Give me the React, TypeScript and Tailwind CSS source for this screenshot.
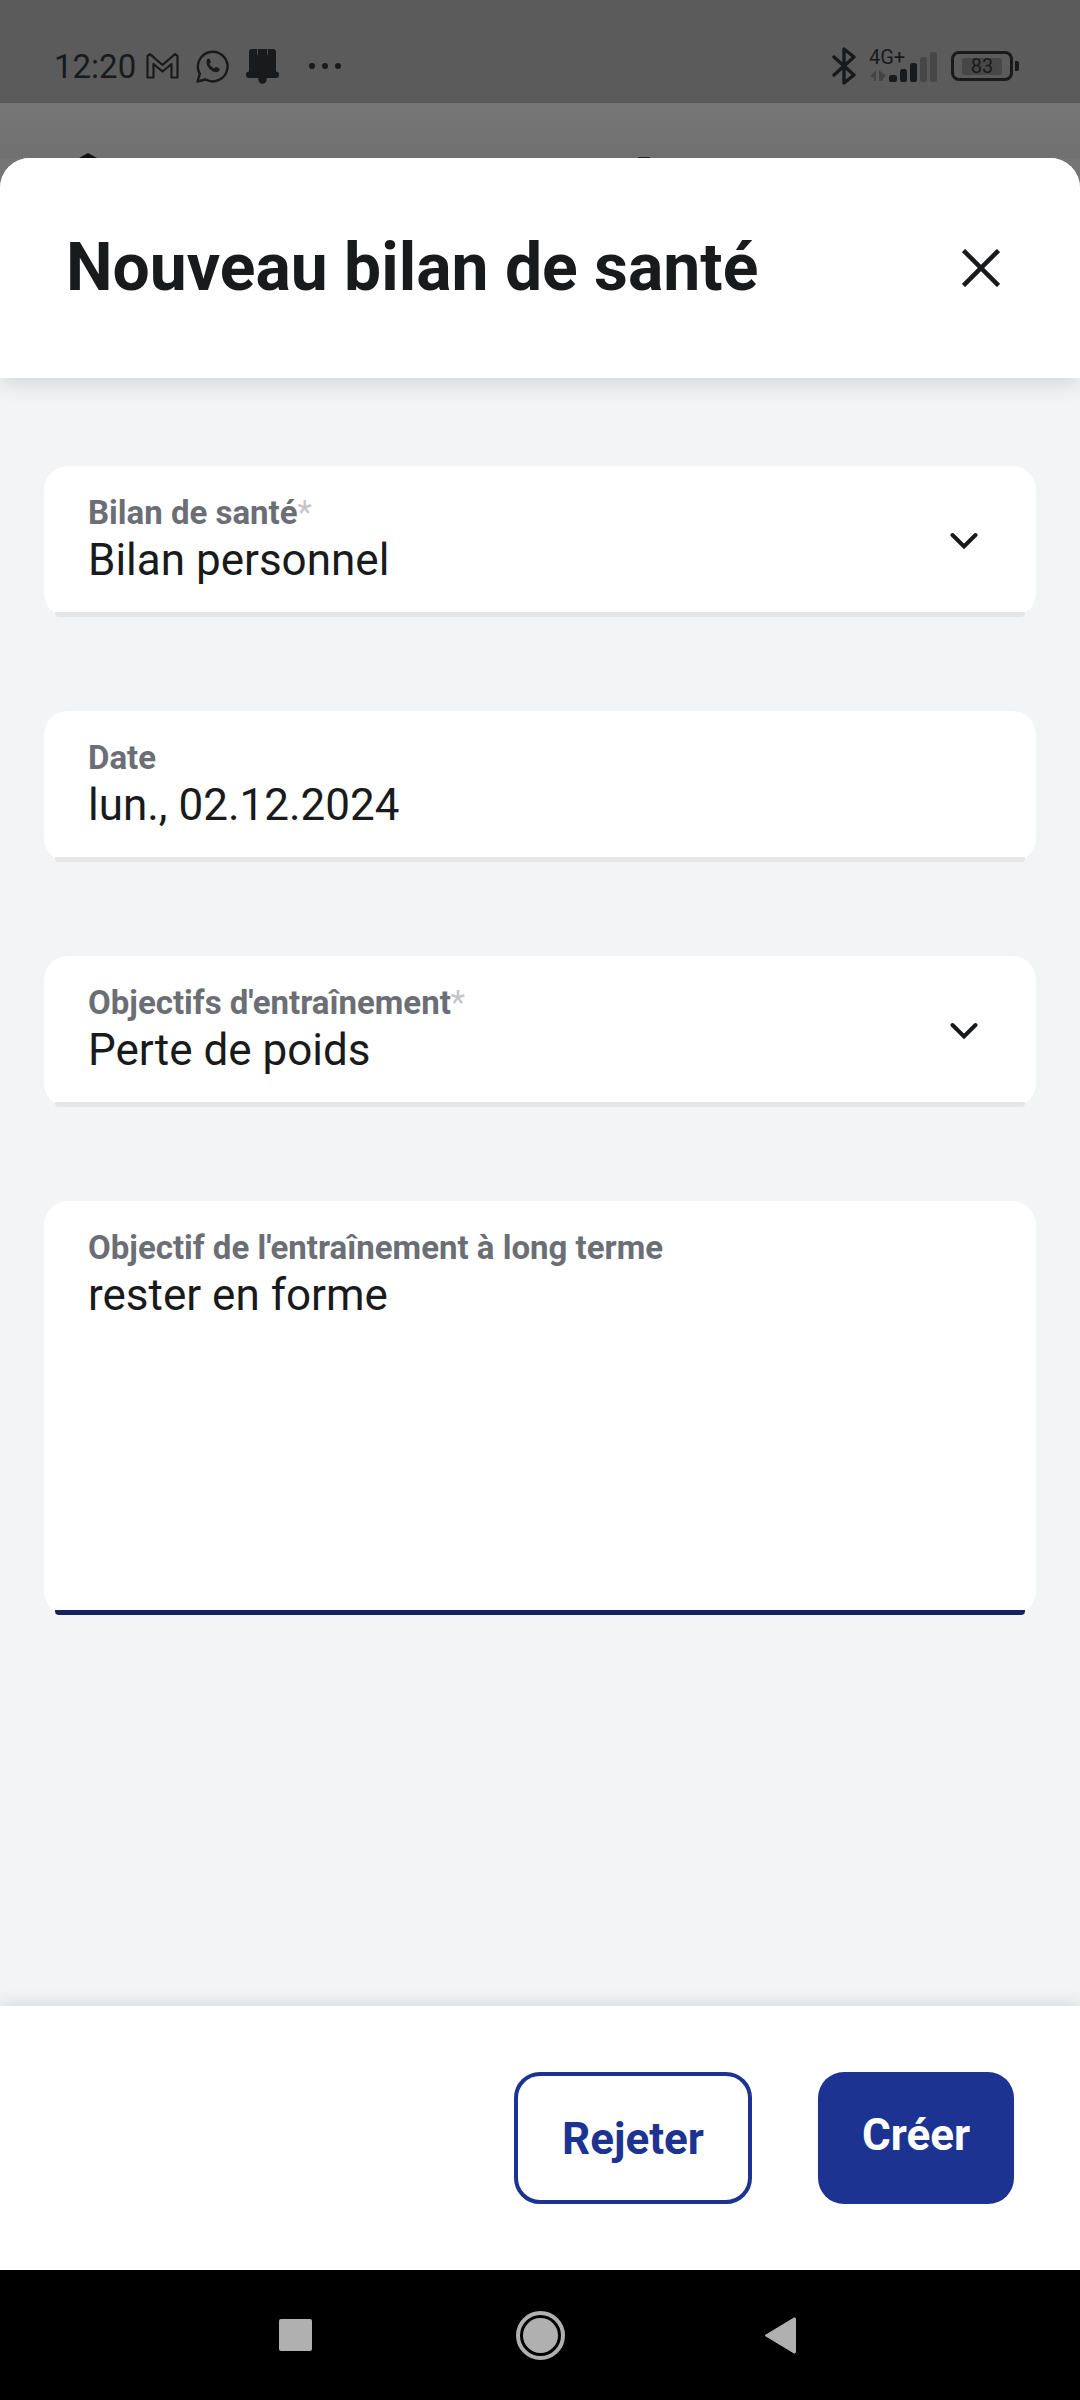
const font = { fontFamily: 'Roboto, sans-serif' };

function StatusBar() {
  return (
    <div className="h-[103px] bg-[#5b5b5b] flex items-center justify-between pl-[55px] pr-[61px] pt-[29px] text-[#191a1c]">
      <div className="flex items-center">
        <span className="text-[33px] leading-none w-[82px] ml-[-1px]">12:20</span>
        {/* gmail */}
        <svg width="33" height="26" viewBox="0 0 33 26" className="ml-[10px]" fill="none" stroke="currentColor" strokeWidth="2.200" strokeLinejoin="round">
          <path d="M1.500 24.500V3l2.500-1.800L16.500 12 29 1.200 31.500 3v21.500h-6V11l-9 7.500-9-7.500v13.500z" />
        </svg>
        {/* whatsapp */}
        <svg width="33" height="33" viewBox="0 0 33 33" className="ml-[17px]" fill="none" stroke="currentColor">
          <path d="M1.500 31.500l2.300-7.700A14.800 14.800 0 1 1 9.500 29.500z" strokeWidth="2.400" strokeLinejoin="round" />
          <path d="M11 9.500c1-1.300 2.300-1.300 2.900 0l1 2.500-1.400 2c1 2 2.500 3.400 4.500 4.400l2-1.400 2.500 1c1.400.6 1.400 2 .4 3-2 2-5 1.400-8-1s-5.400-6-3.900-10.500z" fill="currentColor" stroke="none" />
        </svg>
        {/* parcel notification */}
        <svg width="33" height="35" viewBox="0 0 33 35" className="ml-[17px]" fill="currentColor">
          <path d="M3 2.500A2.500 2.500 0 0 1 5.500 0h22A2.500 2.500 0 0 1 30 2.500V23H3z" />
          <path d="M11.500 0v6M21.500 0v6" stroke="#4a4a4a" strokeWidth="1" />
          <rect x="0" y="22.500" width="33" height="6.500" rx="3.200" />
          <circle cx="16.500" cy="30.500" r="4.200" />
        </svg>
        {/* overflow dots */}
        <div className="flex gap-[7px] ml-[30px]">
          <span className="w-[6px] h-[6px] rounded-full bg-current" />
          <span className="w-[6px] h-[6px] rounded-full bg-current" />
          <span className="w-[6px] h-[6px] rounded-full bg-current" />
        </div>
      </div>
      <div className="flex items-center">
        {/* bluetooth */}
        <svg width="24" height="38" viewBox="0 0 24 38" fill="none" stroke="currentColor" strokeWidth="3.400" strokeLinecap="round" strokeLinejoin="round">
          <path d="M2 10l20 18-10 8V2l10 8L2 28" />
        </svg>
        {/* network */}
        <div className="relative w-[68px] h-[34px] ml-[13px]">
          <span className="absolute left-0 top-[-2px] text-[20px] leading-none">4G+</span>
          <svg width="68" height="34" viewBox="0 0 68 34" className="absolute left-0 top-0" fill="currentColor">
            <path d="M1 27l6-6v11H5v-3zM10 21l7 6-3 2v3h-4z" opacity=".35" />
            <rect x="20" y="26" width="8" height="7" rx="2.500" />
            <rect x="31" y="20" width="7" height="13" rx="2.500" />
            <rect x="41" y="14" width="7" height="19" rx="2.500" />
            <rect x="51" y="8" width="7" height="25" rx="2.500" opacity=".3" />
            <rect x="61" y="3" width="7" height="30" rx="2.500" opacity=".3" />
          </svg>
        </div>
        {/* battery */}
        <div className="ml-[14px] flex items-center">
          <div className="w-[62px] h-[30px] rounded-[8px] border-[3.500px] border-[#191a1c] flex items-center justify-center">
            <div className="w-[40px] h-[17px] bg-[#474747] rounded-[2px] flex items-center justify-center">
              <span className="text-[20px] leading-none">83</span>
            </div>
          </div>
          <span className="w-[4px] h-[10px] rounded-r-[2px] bg-[#191a1c] ml-[2px]" />
        </div>
      </div>
    </div>
  );
}

function Chevron() {
  return (
    <svg width="28" height="18" viewBox="0 0 28 18" className="mt-[39px] text-[#191a1c]" fill="none" stroke="currentColor" strokeWidth="4" strokeLinecap="round" strokeLinejoin="miter">
      <path d="M2.500 3L14 14.500 25.500 3" />
    </svg>
  );
}

function Field({
  label,
  value,
  required,
  chevron,
  focused,
  tall,
}: {
  label: string;
  value: string;
  required?: boolean;
  chevron?: boolean;
  focused?: boolean;
  tall?: boolean;
}) {
  return (
    <div className={`relative rounded-[24px] bg-white pl-[44px] pr-[58px] pt-[27px] flex items-start justify-between ${tall ? 'h-[414px]' : 'h-[151px]'}`}>
      <div>
        <div className="text-[33px] leading-[39px] font-bold text-[#6c6e76]">
          {label}
          {required && <span className="text-[#c4c5c8] font-normal">*</span>}
        </div>
        <div className="text-[44px] leading-[56px] text-[#191a1c]">{value}</div>
      </div>
      {chevron && <Chevron />}
      <div className={`absolute left-[11px] right-[11px] bottom-0 h-[5px] rounded-b-[4px] ${focused ? 'bg-[#14235f]' : 'bg-[#e6e6e7]'}`} />
    </div>
  );
}

export default function App() {
  return (
    <div style={font} className="relative w-[1080px] h-[2400px] flex flex-col bg-[#757575] overflow-hidden">
      <StatusBar />
      <div className="h-[55px] relative bg-gradient-to-b from-[#777777] to-[#707070]">
        <span className="absolute left-[79px] bottom-0 w-0 h-0 border-x-[9px] border-x-transparent border-b-[5px] border-b-[#111]" />
        <span className="absolute left-[638px] bottom-0 w-[12px] h-[1px] rounded-t-full bg-[#222]" />
      </div>
      <div className="flex-1 flex flex-col rounded-t-[30px] overflow-hidden bg-[#f3f4f6]">
        <div className="h-[220px] bg-white shadow-[0_6px_20px_rgba(0,0,0,0.12)] relative flex items-center justify-between pl-[66px] pr-[80px]">
          <h1 className="text-[66px] font-bold leading-none text-[#191a1c]">Nouveau bilan de santé</h1>
          <svg width="38" height="38" viewBox="0 0 38 38" className="text-[#191a1c]" fill="none" stroke="currentColor" strokeWidth="4.500">
            <path d="M1.500 1.500l35 35M36.500 1.500l-35 35" />
          </svg>
        </div>
        <div className="flex-1 flex flex-col px-[44px] pt-[88px] gap-[94px]">
          <Field label="Bilan de santé" value="Bilan personnel" required chevron />
          <Field label="Date" value="lun., 02.12.2024" />
          <Field label="Objectifs d'entraînement" value="Perte de poids" required chevron />
          <Field label="Objectif de l'entraînement à long terme" value="rester en forme" tall focused />
        </div>
        <div className="h-[264px] bg-white shadow-[0_-4px_14px_rgba(0,0,0,0.1)] relative flex items-center justify-end gap-[66px] pr-[66px]">
          <button className="w-[238px] h-[132px] rounded-[26px] border-[4.500px] border-[#1c3391] bg-white text-[#1c3391] text-[44px] font-bold pt-[2px]">
            Rejeter
          </button>
          <button className="w-[196px] h-[132px] rounded-[26px] bg-[#1c3391] text-white text-[44px] font-bold pb-[6px]">
            Créer
          </button>
        </div>
        <div className="h-[130px] bg-black relative flex items-center pl-[279px]">
          <div className="w-[33px] h-[32px] rounded-[2px] bg-[#b0b0b0]" />
          <div className="ml-[204px] w-[49px] h-[49px] rounded-full border-[4px] border-[#b0b0b0] p-[3px]">
            <div className="w-full h-full rounded-full bg-[#b0b0b0]" />
          </div>
          <svg width="32" height="37" viewBox="0 0 32 37" className="ml-[199px]" fill="#b0b0b0">
            <path d="M1 18.500L30 1a1 1 0 0 1 1.500 1v33a1 1 0 0 1-1.500 1z" stroke="#b0b0b0" strokeLinejoin="round" />
          </svg>
        </div>
      </div>
    </div>
  );
}
